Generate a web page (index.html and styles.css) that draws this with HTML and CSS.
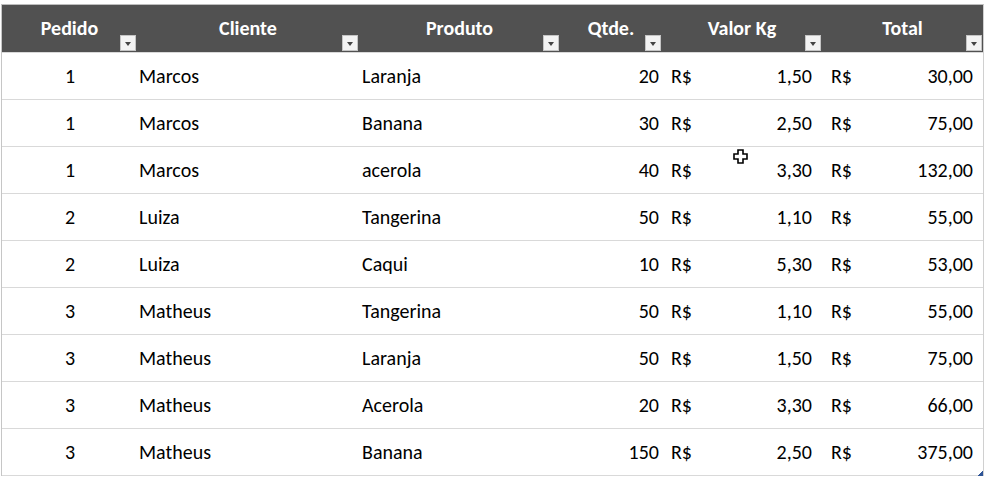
FILE: index.html
```html
<!DOCTYPE html>
<html lang="pt-BR">
<head>
<meta charset="utf-8">
<title>Pedidos</title>
<link rel="stylesheet" href="styles.css">
</head>
<body>
<div class="sheet">
  <div class="table">
    <div class="row head">
      <div class="cell c-ped"><span class="h">Pedido</span><span class="flt"></span></div>
      <div class="cell c-cli"><span class="h">Cliente</span><span class="flt"></span></div>
      <div class="cell c-pro"><span class="h">Produto</span><span class="flt"></span></div>
      <div class="cell c-qtd"><span class="h">Qtde.</span><span class="flt"></span></div>
      <div class="cell c-val"><span class="h">Valor Kg</span><span class="flt"></span></div>
      <div class="cell c-tot"><span class="h">Total</span><span class="flt"></span></div>
    </div>
    <div class="row"><div class="cell ped">1</div><div class="cell cli">Marcos</div><div class="cell pro">Laranja</div><div class="cell qtd">20</div><div class="cell acc"><span>R$</span><span>1,50</span></div><div class="cell acc"><span>R$</span><span>30,00</span></div></div>
    <div class="row"><div class="cell ped">1</div><div class="cell cli">Marcos</div><div class="cell pro">Banana</div><div class="cell qtd">30</div><div class="cell acc"><span>R$</span><span>2,50</span></div><div class="cell acc"><span>R$</span><span>75,00</span></div></div>
    <div class="row"><div class="cell ped">1</div><div class="cell cli">Marcos</div><div class="cell pro">acerola</div><div class="cell qtd">40</div><div class="cell acc"><span>R$</span><span>3,30</span></div><div class="cell acc"><span>R$</span><span>132,00</span></div></div>
    <div class="row"><div class="cell ped">2</div><div class="cell cli">Luiza</div><div class="cell pro">Tangerina</div><div class="cell qtd">50</div><div class="cell acc"><span>R$</span><span>1,10</span></div><div class="cell acc"><span>R$</span><span>55,00</span></div></div>
    <div class="row"><div class="cell ped">2</div><div class="cell cli">Luiza</div><div class="cell pro">Caqui</div><div class="cell qtd">10</div><div class="cell acc"><span>R$</span><span>5,30</span></div><div class="cell acc"><span>R$</span><span>53,00</span></div></div>
    <div class="row"><div class="cell ped">3</div><div class="cell cli">Matheus</div><div class="cell pro">Tangerina</div><div class="cell qtd">50</div><div class="cell acc"><span>R$</span><span>1,10</span></div><div class="cell acc"><span>R$</span><span>55,00</span></div></div>
    <div class="row"><div class="cell ped">3</div><div class="cell cli">Matheus</div><div class="cell pro">Laranja</div><div class="cell qtd">50</div><div class="cell acc"><span>R$</span><span>1,50</span></div><div class="cell acc"><span>R$</span><span>75,00</span></div></div>
    <div class="row"><div class="cell ped">3</div><div class="cell cli">Matheus</div><div class="cell pro">Acerola</div><div class="cell qtd">20</div><div class="cell acc"><span>R$</span><span>3,30</span></div><div class="cell acc"><span>R$</span><span>66,00</span></div></div>
    <div class="row last"><div class="cell ped">3</div><div class="cell cli">Matheus</div><div class="cell pro">Banana</div><div class="cell qtd">150</div><div class="cell acc"><span>R$</span><span>2,50</span></div><div class="cell acc"><span>R$</span><span>375,00</span></div></div>
    <span class="resize"></span>
  </div>
  <svg class="cursor" width="15" height="15" viewBox="0 0 15 15">
    <path d="M5 1h5v4h4v5h-4v4h-5v-4h-4v-5h4z" fill="#fff" stroke="#000" stroke-width="1.6" stroke-linejoin="miter"/>
  </svg>
</div>
</body>
</html>
```
FILE: styles.css
```css
html, body {
  margin: 0;
  padding: 0;
  background: #ffffff;
}
body {
  font-family: Calibri, Carlito, Lato, "Liberation Sans", sans-serif;
  font-size: 20px;
  color: #000;
}
.sheet {
  position: relative;
  width: 990px;
  height: 482px;
  padding: 4px 0 0 1px;
  box-sizing: border-box;
}
.table {
  position: relative;
  width: 981px;
  border-left: 1px solid #c6c6c6;
  border-right: 1px solid #d0d0d0;
  border-top: 1px solid #bdbdbd;
}
.row {
  display: grid;
  grid-template-columns: 135px 222px 201px 102px 160px 161px;
  height: 47px;
  border-top: 1px solid #d9d9d9;
  box-sizing: border-box;
}
.row.last {
  height: 48px;
  border-bottom: 1px solid #d9d9d9;
}
.row.head {
  background: #515151;
  border-top: none;
  height: 47px;
  color: #fff;
  font-weight: bold;
}
.cell {
  display: flex;
  align-items: center;
  white-space: nowrap;
  position: relative;
  line-height: 1;
}
.head .cell {
  justify-content: center;
  padding-bottom: 2px;
  box-sizing: border-box;
}
.flt {
  position: absolute;
  right: 1px;
  bottom: 1px;
  width: 16px;
  height: 16px;
  background: #f3f3f3;
  border: 1px solid #c4c4c4;
  box-sizing: border-box;
}
.flt::after {
  content: "";
  position: absolute;
  left: 4px;
  top: 6px;
  border-left: 3px solid transparent;
  border-right: 3px solid transparent;
  border-top: 4px solid #444;
}
.ped { justify-content: center; padding-left: 1px; }
.cli { padding-left: 2px; }
.pro { padding-left: 3px; }
.qtd { justify-content: flex-end; padding-right: 3px; }
.acc {
  justify-content: space-between;
  padding: 0 10px 0 9px;
}
.resize {
  position: absolute;
  right: 0;
  bottom: 0;
  width: 6px;
  height: 6px;
  background: linear-gradient(135deg, transparent 50%, #2f5597 50%);
}
.cursor {
  position: absolute;
  left: 733px;
  top: 149px;
}
```
